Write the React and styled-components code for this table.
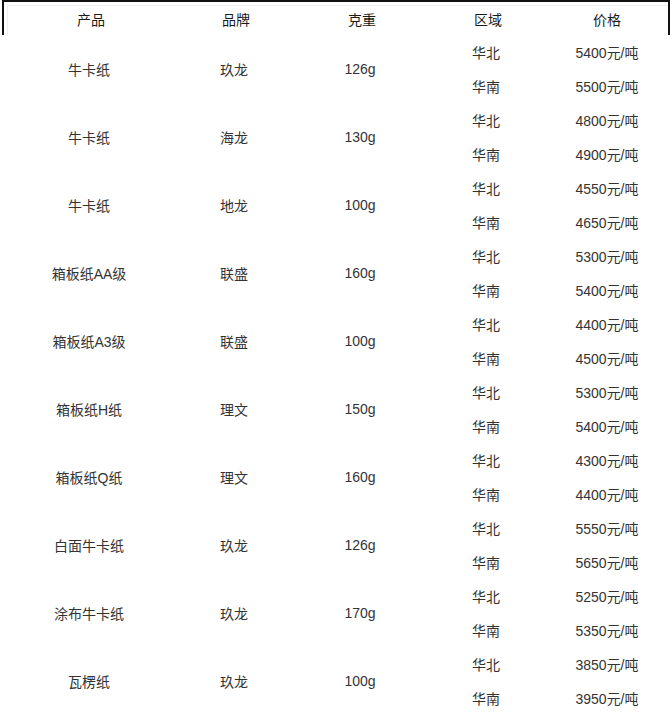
import React from 'react';
import styled, { createGlobalStyle } from 'styled-components';

const GlobalStyle = createGlobalStyle`
  html, body {
    margin: 0;
    padding: 0;
    background: #fff;
  }
  body {
    font-family: "Liberation Sans", "Noto Sans CJK SC", sans-serif;
    font-size: 14px;
    color: #333;
  }
`;

const Table = styled.div`
  width: 668px;
  margin-left: 2px;
`;

const COLS = '174px 116px 136px 116px 1fr';

const Header = styled.div`
  box-sizing: border-box;
  display: grid;
  grid-template-columns: ${COLS};
  height: 35px;
  border: 2px solid #111;
  border-bottom: none;
  box-shadow: inset 3px 3px 0 #fff, inset 4px 4px 0 #f0f0f0;
  align-items: center;
`;

const HeadCell = styled.div`
  text-align: center;
  font-weight: normal;
  color: #1a1a1a;
`;

const ProductRow = styled.div`
  display: grid;
  grid-template-columns: ${COLS};
  grid-template-rows: 34px 34px;
  align-items: center;
`;

const SpanCell = styled.div`
  grid-row: 1 / span 2;
  grid-column: ${p => p.$col};
  text-align: center;
`;

const Cell = styled.div`
  grid-column: ${p => p.$col};
  text-align: center;
`;

const data = [
  ['牛卡纸', '玖龙', '126g', '5400', '5500'],
  ['牛卡纸', '海龙', '130g', '4800', '4900'],
  ['牛卡纸', '地龙', '100g', '4550', '4650'],
  ['箱板纸AA级', '联盛', '160g', '5300', '5400'],
  ['箱板纸A3级', '联盛', '100g', '4400', '4500'],
  ['箱板纸H纸', '理文', '150g', '5300', '5400'],
  ['箱板纸Q纸', '理文', '160g', '4300', '4400'],
  ['白面牛卡纸', '玖龙', '126g', '5550', '5650'],
  ['涂布牛卡纸', '玖龙', '170g', '5250', '5350'],
  ['瓦楞纸', '玖龙', '100g', '3850', '3950'],
];

export default function App() {
  return (
    <>
      <GlobalStyle />
      <Table>
        <Header>
          {['产品', '品牌', '克重', '区域', '价格'].map(h => (
            <HeadCell key={h}>{h}</HeadCell>
          ))}
        </Header>
        {data.map(([name, brand, weight, north, south], i) => (
          <ProductRow key={i}>
            <SpanCell $col={1}>{name}</SpanCell>
            <SpanCell $col={2}>{brand}</SpanCell>
            <SpanCell $col={3}>{weight}</SpanCell>
            <Cell $col={4}>华北</Cell>
            <Cell $col={5}>{north}元/吨</Cell>
            <Cell $col={4}>华南</Cell>
            <Cell $col={5}>{south}元/吨</Cell>
          </ProductRow>
        ))}
      </Table>
    </>
  );
}
